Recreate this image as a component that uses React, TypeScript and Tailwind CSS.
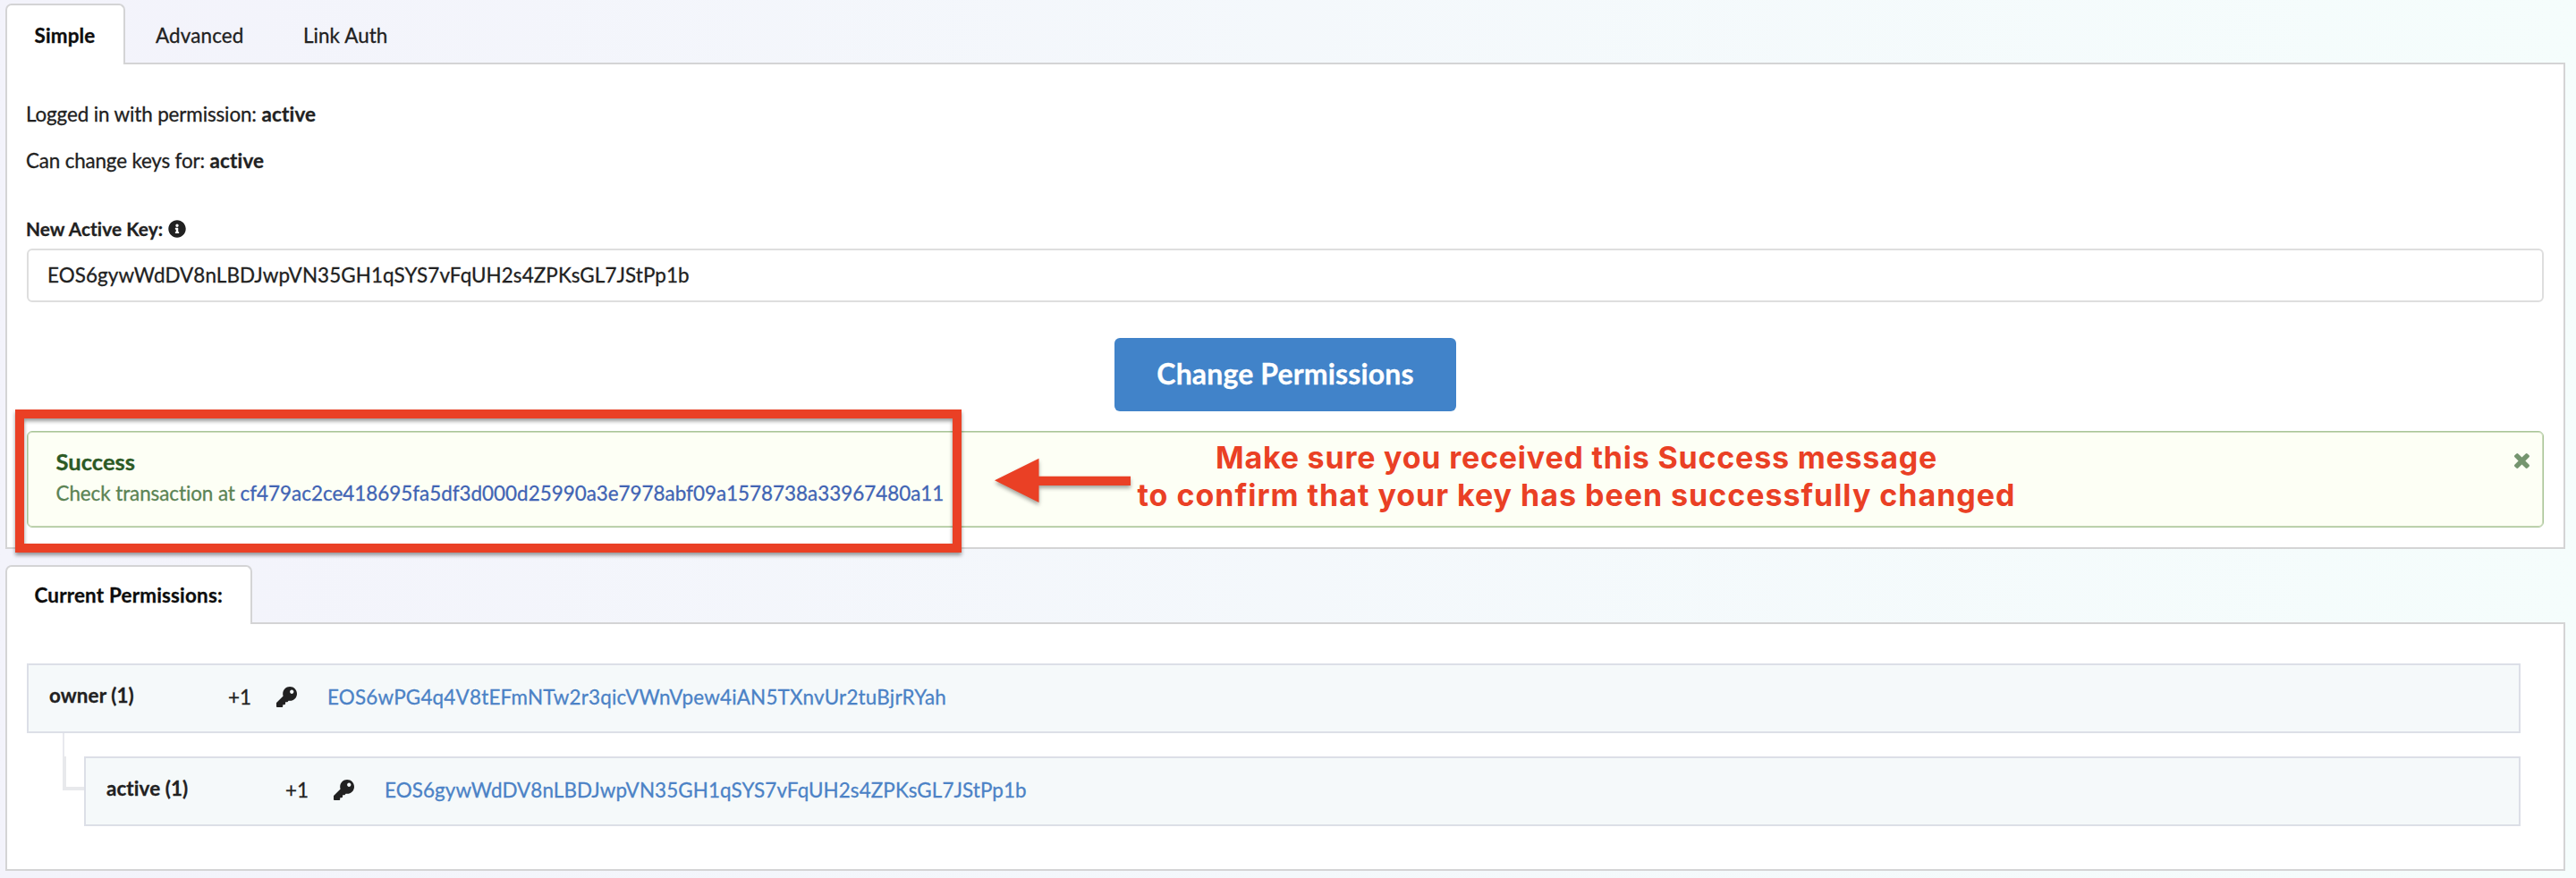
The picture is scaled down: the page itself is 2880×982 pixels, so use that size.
import type { ReactNode } from 'react';
import { FaInfoCircle, FaKey } from 'react-icons/fa';

function CloseIcon() {
  return (
    <svg viewBox="302 366 1188 1188" className="h-[17px] w-[17px] fill-[#75956f]">
      <path d="M1490 1322q0 40-28 68l-136 136q-28 28-68 28t-68-28l-294-294-294 294q-28 28-68 28t-68-28l-136-136q-28-28-28-68t28-68l294-294-294-294q-28-28-28-68t28-68l136-136q28-28 68-28t68 28l294 294 294-294q28-28 68-28t68 28l136 136q28 28 28 68t-28 68l-294 294 294 294q28 28 28 68z" />
    </svg>
  );
}

function ActiveTab({ className, children }: { className: string; children: ReactNode }) {
  return (
    <div
      className={`relative z-10 rounded-t-[7px] border-2 border-b-0 border-[#d4d4d5] bg-white pl-[30.5px] font-bold text-[#0d0d0d] ${className}`}
    >
      {children}
    </div>
  );
}

function PermissionRow({ name, address, className, link }: { name: string; address: string; className: string; link: string }) {
  return (
    <div className={`mr-[48px] flex h-[78px] border-2 border-[#dcdfe7] bg-[#f5f9fa] pl-[23px] pt-5 ${className}`}>
      <div className="w-[200px] font-bold tracking-[0.1px]">{name}</div>
      <div className="w-[54px] pt-0.5">+1</div>
      <div className="w-[57px] pt-1">
        <FaKey className="h-[23px] w-[23px]" />
      </div>
      <a className={`pt-0.5 text-[#4b82c6] ${link}`}>{address}</a>
    </div>
  );
}

function Annotation() {
  return (
    <>
      <div className="absolute left-[17px] top-[458px] h-[160px] w-[1058px] border-10 border-[#ea4025] drop-shadow-[0_3px_2px_rgba(0,0,0,0.4)]" />
      <svg
        viewBox="0 0 152 50"
        className="absolute left-[1112px] top-[512px] h-[50px] w-[152px] overflow-visible fill-[#ea4025] drop-shadow-[0_3px_2px_rgba(0,0,0,0.35)]"
      >
        <path d="M0 25.3 49.5 0.7V20.8H152V31H49.5V50z" />
      </svg>
      <div className="absolute left-[1271px] top-[491px] flex w-[983px] flex-col items-center gap-px whitespace-nowrap font-[Inter,sans-serif] text-[34px] font-bold leading-[41px] text-[#ea4025] [-webkit-text-stroke:0]">
        <div className="tracking-[0.79px]">Make sure you received this Success message</div>
        <div className="tracking-[0.98px]">to confirm that your key has been successfully changed</div>
      </div>
    </>
  );
}

export default function App() {
  return (
    <div className="relative h-[982px] w-[2880px] overflow-hidden bg-linear-to-r from-[#f3f3fb] to-[#f5fdfc] pl-1.5 pr-3 pt-1 font-[Lato,sans-serif] text-[22.4px] leading-[27px] text-[#212121] [-webkit-text-stroke:0.3px_currentColor]">
      <div className="flex h-[66px]">
        <ActiveTab className="h-[68px] w-[134px] pt-5 tracking-[0.15px]">Simple</ActiveTab>
        <div className="pl-[34px] pt-[22px] tracking-[0.15px]">Advanced</div>
        <div className="pl-[66.5px] pt-[22px] tracking-[0.1px]">Link Auth</div>
      </div>
      <section className="h-[544px] border-2 border-[#d4d4d5] bg-white pl-[22px] pr-[22px] pt-[42px]">
        <div className="-ml-[1px] tracking-[-0.11px]">
          Logged in with permission: <b className="tracking-[0.2px]">active</b>
        </div>
        <div className="-ml-[1px] mt-[25px] tracking-[-0.16px]">
          Can change keys for: <b className="tracking-[0.2px]">active</b>
        </div>
        <div className="-ml-[1px] mt-[50px] flex h-[25px] items-center text-[20.8px] font-bold leading-[25px] tracking-[0.09px]">
          New Active Key:
          <FaInfoCircle className="ml-[5.5px] h-5 w-5" />
        </div>
        <div className="mt-[10px] h-[60px] rounded-[6px] border-2 border-[#dedede] pl-[21px] pt-[14px] tracking-[0.11px]">
          EOS6gywWdDV8nLBDJwpVN35GH1qSYS7vFqUH2s4ZPKsGL7JStPp1b
        </div>
        <div className="mt-10 flex justify-center">
          <button className="h-[82px] w-[382px] rounded-[6px] bg-[#4183c9] pb-[23px] pt-5 text-[32px] font-bold leading-[39px] tracking-[0.14px] text-white">
            Change Permissions
          </button>
        </div>
        <div className="mt-[22px] flex h-[108px] justify-between rounded-[6px] border border-[#a9c598] bg-[#fdfff5] pl-8 pr-[15px] pt-[18px] text-[#5b8354] inset-ring-1 inset-ring-[#ccdcbc]">
          <div>
            <div className="-ml-[0.5px] text-[25.6px] font-bold leading-[30px] text-[#2c5a24]">Success</div>
            <div className="-ml-[0.5px] mt-[7px] tracking-[-0.06px]">
              Check transaction at{' '}
              <a className="tracking-[0.01px] text-[#4164b4]">
                cf479ac2ce418695fa5df3d000d25990a3e7978abf09a1578738a33967480a11
              </a>
            </div>
          </div>
          <div className="pt-[6px]">
            <CloseIcon />
          </div>
        </div>
      </section>
      <div className="mt-[18px] h-[64px]">
        <ActiveTab className="h-[66px] w-[276px] pt-[18px] tracking-[0.2px]">Current Permissions:</ActiveTab>
      </div>
      <section className="h-[278px] border-2 border-[#d4d4d5] bg-white pl-[22px] pt-[44px]">
        <PermissionRow
          name="owner (1)"
          address="EOS6wPG4q4V8tEFmNTw2r3qicVWnVpew4iAN5TXnvUr2tuBjrRYah"
          className=""
          link="tracking-[0.22px]"
        />
        <div className="flex">
          <div className="flex w-[64px] flex-col pl-10">
            <div className="h-[26px] border-l-2 border-[#e8e9ee]" />
            <div className="h-[38px] border-b-4 border-l-4 border-[#e8e9ec]" />
          </div>
          <PermissionRow
            name="active (1)"
            address="EOS6gywWdDV8nLBDJwpVN35GH1qSYS7vFqUH2s4ZPKsGL7JStPp1b"
            className="mt-[26px] grow"
            link="tracking-[0.11px]"
          />
        </div>
      </section>
      <Annotation />
    </div>
  );
}
